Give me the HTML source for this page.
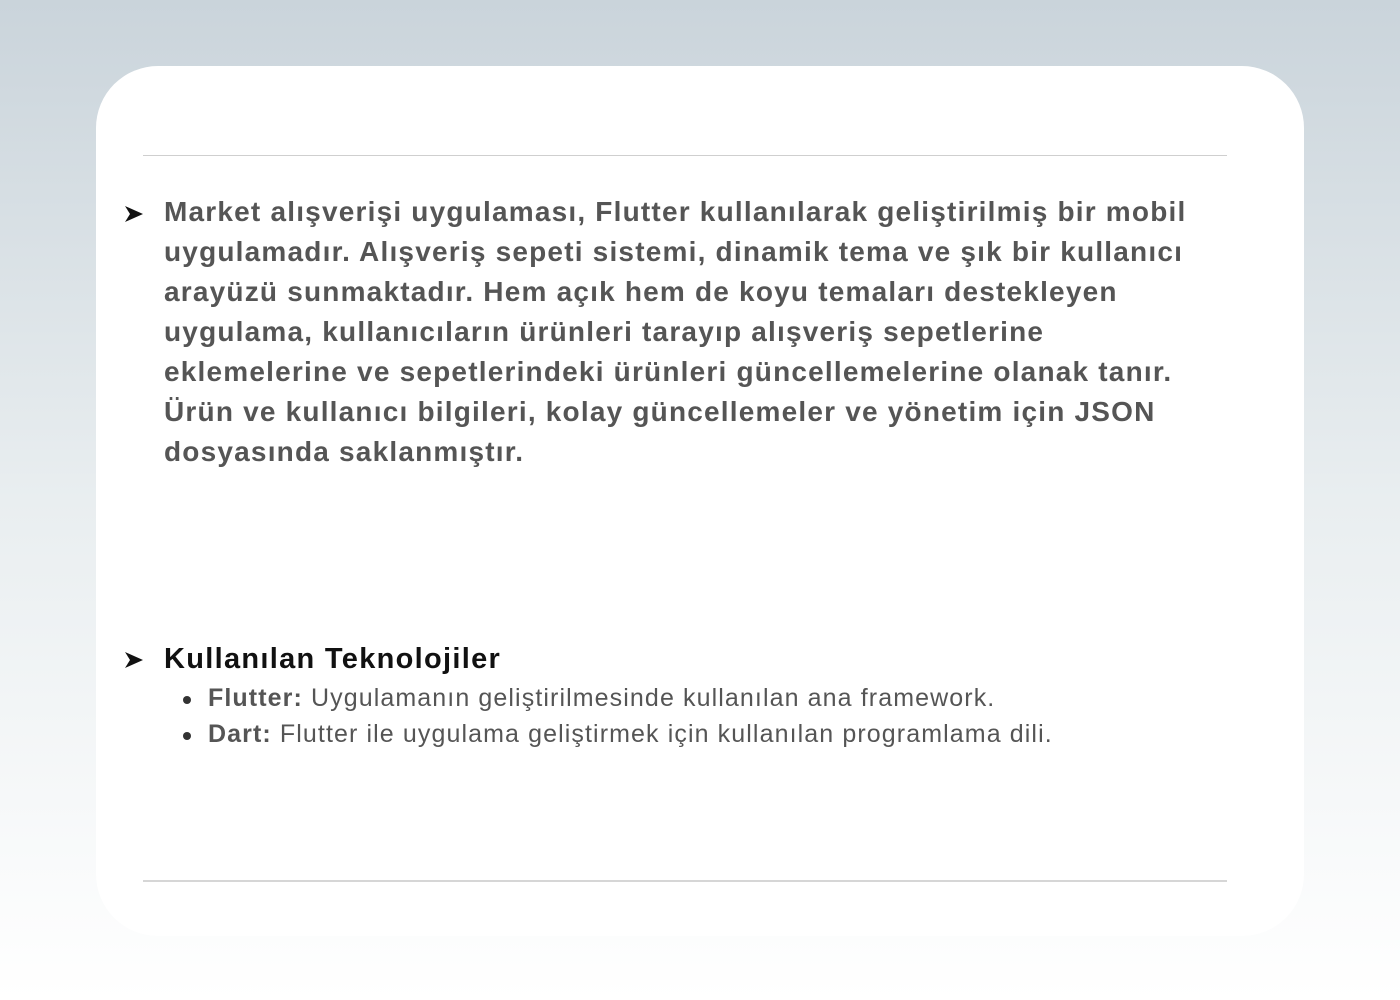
<!DOCTYPE html>
<html><head><meta charset="utf-8"><style>
html,body{margin:0;padding:0}
body{width:1400px;height:1000px;background:linear-gradient(#cad4db 0%,#e9eef0 50%,#ffffff 100%);position:relative;overflow:hidden;font-family:"Liberation Sans",sans-serif}
.card{position:absolute;left:96px;top:66px;width:1208px;height:870px;background:#fff;border-radius:62px}
.hr{position:absolute;left:143px;width:1084px;height:1px;background:#cfcfcf}
.p{position:absolute;left:164px;top:192px;font-weight:bold;font-size:28px;line-height:40px;color:#555;letter-spacing:1.2px;white-space:nowrap}
.h{position:absolute;left:164px;top:640px;font-weight:bold;font-size:29px;color:#111;line-height:38px;letter-spacing:1.3px}
.li{position:absolute;left:208px;font-size:25px;color:#555;white-space:nowrap;letter-spacing:1.1px}
.dot{position:absolute;left:183px;width:8px;height:8px;border-radius:50%;background:#333}
</style></head><body>
<div class="card"></div>
<div class="hr" style="top:155px"></div>
<div class="hr" style="top:880px;height:2px;background:#d6d6d6"></div>
<svg style="position:absolute;left:124px;top:205px" width="20" height="18" viewBox="0 0 20 18"><path d="M1 1 L19 9 L1 17 L6 9 Z" fill="#111"/></svg>
<div class="p">Market alışverişi uygulaması, Flutter kullanılarak geliştirilmiş bir mobil<br>uygulamadır. Alışveriş sepeti sistemi, dinamik tema ve şık bir kullanıcı<br>arayüzü sunmaktadır. Hem açık hem de koyu temaları destekleyen<br>uygulama, kullanıcıların ürünleri tarayıp alışveriş sepetlerine<br>eklemelerine ve sepetlerindeki ürünleri güncellemelerine olanak tanır.<br>Ürün ve kullanıcı bilgileri, kolay güncellemeler ve yönetim için JSON<br>dosyasında saklanmıştır.</div>
<svg style="position:absolute;left:124px;top:651px" width="20" height="18" viewBox="0 0 20 18"><path d="M1 1 L19 9 L1 17 L6 9 Z" fill="#111"/></svg>
<div class="h">Kullanılan Teknolojiler</div>
<div class="dot" style="top:696px"></div>
<div class="li" style="top:684px"><b>Flutter:</b> Uygulamanın geliştirilmesinde kullanılan ana framework.</div>
<div class="dot" style="top:732px"></div>
<div class="li" style="top:720px"><b>Dart:</b> Flutter ile uygulama geliştirmek için kullanılan programlama dili.</div>
</body></html>
